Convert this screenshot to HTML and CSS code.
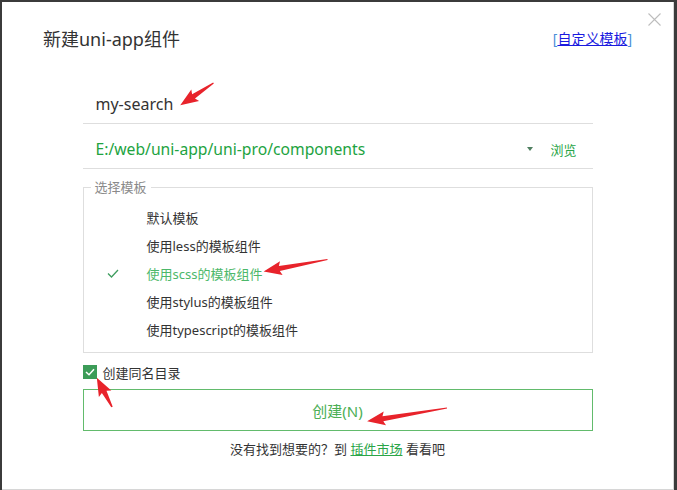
FILE: index.html
```html
<!DOCTYPE html>
<html lang="zh-CN">
<head>
<meta charset="utf-8">
<title>新建uni-app组件</title>
<link rel="stylesheet" href="styles.css">
</head>
<body>
<div class="dialog">
  <button class="close" aria-label="关闭">
    <svg width="13" height="13" viewBox="0 0 13 13"><path d="M0.5 0.5L12.5 12.5M12.5 0.5L0.5 12.5" stroke="#bdbdbd" stroke-width="1.1" fill="none"/></svg>
  </button>
  <div class="header">
    <h1 class="title">新建uni-app组件</h1>
    <a class="custom"><span class="br">[</span><span class="ul">自定义模板</span><span class="br">]</span></a>
  </div>
  <div class="form">
    <div class="field name">my-search</div>
    <div class="field path">
      <span class="path-text">E:/web/uni-app/uni-pro/components</span>
      <span class="caret"></span>
      <span class="browse">浏览</span>
    </div>
    <fieldset class="templates">
      <legend>选择模板</legend>
      <ul class="list">
        <li class="item"><span class="mark"></span>默认模板</li>
        <li class="item"><span class="mark"></span>使用less的模板组件</li>
        <li class="item active"><span class="mark"><svg width="12" height="9" viewBox="0 0 12 9"><path d="M1 4.5L4.5 8L11 1" stroke="#3f9d5f" stroke-width="1.3" fill="none"/></svg></span>使用scss的模板组件</li>
        <li class="item"><span class="mark"></span>使用stylus的模板组件</li>
        <li class="item"><span class="mark"></span>使用typescript的模板组件</li>
      </ul>
    </fieldset>
    <label class="check-row">
      <span class="box"><svg width="10" height="8" viewBox="0 0 10 8"><path d="M1 4L4 6.8L9 1.2" stroke="#fff" stroke-width="1.5" fill="none"/></svg></span>
      创建同名目录
    </label>
    <button class="create">创建(N)</button>
    <p class="footer">没有找到想要的？到 <a class="market">插件市场</a> 看看吧</p>
  </div>
</div>
<svg class="arrows" width="677" height="490" viewBox="0 0 677 490">
  <g fill="#e8232b">
    <g transform="translate(213.5,83) rotate(146.3)"><polygon points="0,-0.6 24,-2.6 22,-7 40,0 22,7 24,2.6 0,0.6"/></g>
    <g transform="translate(327.5,259.5) rotate(169.4)"><polygon points="0,-0.6 49,-2.6 47,-7 65,0 47,7 49,2.6 0,0.6"/></g>
    <g transform="translate(112,407) rotate(-117.4)"><polygon points="0,-0.8 17,-2.6 15,-7 33,0 15,7 17,2.6 0,0.8"/></g>
    <g transform="translate(447,408) rotate(170.5)"><polygon points="0,-0.6 65,-2.6 63,-7 81,0 63,7 65,2.6 0,0.6"/></g>
  </g>
</svg>
</body>
</html>
```
FILE: styles.css
```css
html, body {
  margin: 0;
  padding: 0;
}
body {
  background: #3b3b3b;
  width: 677px;
  height: 490px;
  overflow: hidden;
  position: relative;
  font-family: "Noto Sans", "Noto Sans CJK SC", sans-serif;
  color: #333;
}
.dialog {
  position: relative;
  box-sizing: border-box;
  margin: 2px 0 0 2px;
  width: 672px;
  height: 488px;
  background: #fff;
  border-right: 1px solid #d6d6d6;
  border-bottom: 1px solid #d6d6d6;
}
.close {
  position: absolute;
  top: 11px;
  right: 12px;
  padding: 0;
  border: 0;
  background: none;
  width: 13px;
  height: 13px;
  line-height: 0;
}
.header {
  display: flex;
  justify-content: space-between;
  align-items: center;
  padding: 25px 41px 0 41px;
  height: 24px;
}
.title {
  margin: 0;
  font-size: 18px;
  font-weight: normal;
  line-height: 24px;
  color: #333;
}
.custom {
  font-size: 14px;
  line-height: 20px;
  color: #1a1adf;
}
.custom .br {
  color: #4a8fd8;
}
.custom .ul {
  text-decoration: underline;
}
.form {
  width: 510px;
  margin: 0 auto;
}
.field {
  display: flex;
  align-items: center;
  border-bottom: 1px solid #dedede;
  padding-left: 13px;
}
.name {
  margin-top: 33px;
  height: 39px;
  font-size: 16px;
  color: #333;
}
.path {
  height: 38px;
  padding-top: 6px;
  font-size: 15.7px;
  color: #22a33f;
}
.path-text {
  flex: 1;
}
.caret {
  width: 0;
  height: 0;
  border-left: 3px solid transparent;
  border-right: 3px solid transparent;
  border-top: 4px solid #4f7f60;
  margin-right: 17px;
}
.browse {
  font-size: 13px;
  margin-right: 16px;
  color: #2aa548;
}
.templates {
  margin: 10px 0 0 0;
  padding: 0;
  border: 1px solid #dedede;
  min-width: 0;
}
.templates legend {
  margin-left: 7px;
  padding: 0 4px;
  font-size: 13px;
  line-height: 16px;
  color: #8a8a8a;
}
.list {
  list-style: none;
  margin: 0;
  padding: 8px 0 9px 0;
}
.item {
  display: flex;
  align-items: center;
  height: 28px;
  padding-left: 23px;
  font-size: 13px;
  color: #333;
}
.item .mark {
  width: 40px;
  display: flex;
  align-items: center;
}
.item.active {
  color: #4cb86a;
}
.check-row {
  display: flex;
  align-items: center;
  margin-top: 12px;
  height: 14px;
  font-size: 13px;
  color: #333;
}
.box {
  width: 14px;
  height: 14px;
  background: #3c9c58;
  display: flex;
  align-items: center;
  justify-content: center;
  margin-right: 6px;
}
.create {
  display: block;
  box-sizing: border-box;
  width: 510px;
  height: 42px;
  margin-top: 10px;
  border: 1px solid #62bb6c;
  background: #fff;
  color: #4caf55;
  font-family: "Noto Sans", "Noto Sans CJK SC", sans-serif;
  font-size: 15px;
  padding: 0;
}
.footer {
  margin: 9px 0 0 0;
  text-align: center;
  font-size: 13px;
  line-height: 18px;
  color: #333;
}
.market {
  color: #2aa548;
  text-decoration: underline;
}
.arrows {
  position: absolute;
  top: 0;
  left: 0;
  pointer-events: none;
}
```
